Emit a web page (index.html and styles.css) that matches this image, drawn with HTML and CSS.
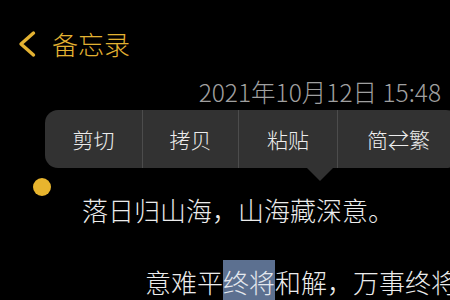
FILE: index.html
```html
<!DOCTYPE html>
<html lang="zh-CN">
<head>
<meta charset="utf-8">
<link rel="stylesheet" href="styles.css">
</head>
<body>
<div class="screen">
  <header class="nav">
    <svg class="chev" width="20" height="28" viewBox="0 0 20 28">
      <path d="M16.5 3 L4 14 L16.5 25" fill="none" stroke="#e3b232" stroke-width="3.4" stroke-linecap="round" stroke-linejoin="round"/>
    </svg>
    <span class="title">备忘录</span>
  </header>
  <div class="date">2021年10月12日 15:48</div>
  <div class="menu">
    <div class="item w1">剪切</div>
    <div class="item w2">拷贝</div>
    <div class="item w3">粘贴</div>
    <div class="item w4">简⇄繁</div>
    <div class="arrow"></div>
  </div>
  <div class="dot"></div>
  <p class="line line1">落日归山海，山海藏深意。</p>
  <p class="line line2">意难平<span class="sel">终将</span>和解，万事终将</p>
</div>
</body>
</html>
```
FILE: styles.css
```css
html, body {
  margin: 0;
  padding: 0;
  background: #000;
}
.screen {
  width: 450px;
  height: 300px;
  overflow: hidden;
  font-family: "Noto Sans CJK SC", "Noto Sans", sans-serif;
  font-weight: 300;
  color: #ececec;
}
.nav {
  display: flex;
  align-items: center;
  height: 28px;
  margin-top: 30px;
  padding-left: 17px;
}
.chev {
  display: block;
}
.title {
  margin-left: 15px;
  font-size: 26px;
  line-height: 28px;
  color: #e3b232;
}
.date {
  margin-top: 21px;
  text-align: right;
  padding-right: 9px;
  font-size: 24.5px;
  line-height: 26px;
  color: #a0a0a0;
  white-space: nowrap;
}
.menu {
  position: relative;
  display: flex;
  margin-top: 5px;
  margin-left: 45px;
  width: 414px;
  height: 58px;
  background: #323232;
  border-radius: 13px;
}
.item {
  display: flex;
  align-items: center;
  justify-content: center;
  font-size: 21px;
  color: #ededed;
  box-sizing: border-box;
}
.w1 { width: 97px; }
.w2 { width: 96px; border-left: 1px solid #4c4c4c; }
.w3 { width: 99px; border-left: 1px solid #4c4c4c; }
.w4 { flex: 1; border-left: 1px solid #4c4c4c; }
.arrow {
  position: absolute;
  left: 262px;
  bottom: -13px;
  width: 0;
  height: 0;
  border-left: 13px solid transparent;
  border-right: 13px solid transparent;
  border-top: 13px solid #323232;
}
.dot {
  width: 18px;
  height: 18px;
  border-radius: 50%;
  background: #e8b52e;
  margin-left: 33px;
  margin-top: 10px;
}
.line {
  margin: 0;
  font-size: 26px;
  line-height: 28px;
  white-space: nowrap;
}
.line1 {
  margin-top: 0;
  margin-left: 82px;
}
.line2 {
  margin-top: 44px;
  margin-left: 145px;
}
.sel {
  background: #5c7090;
  color: #e4e8ee;
  padding: 3px 0 6px;
}
```
